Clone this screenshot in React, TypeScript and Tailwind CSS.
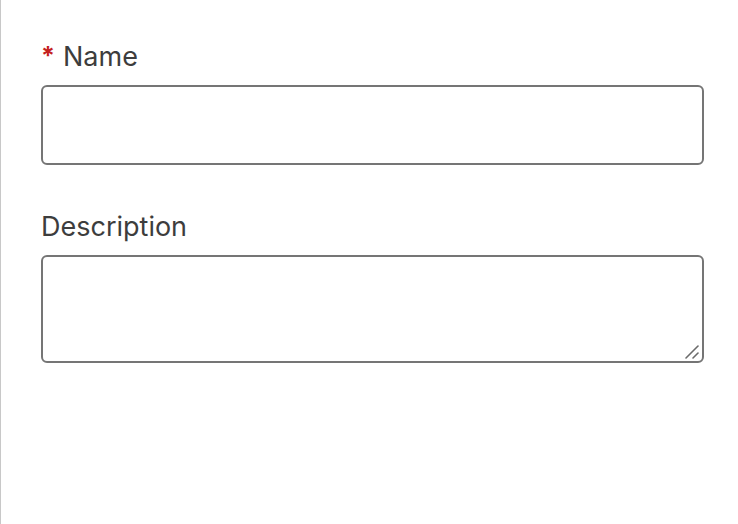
import React from "react";

export default function App() {
  return (
    <div className="w-[738px] h-[524px] bg-white border-l border-[#c8c8c8] flex flex-col pl-[40px] pr-[34px] pt-[41px]" style={{ fontFamily: "Inter, 'Noto Sans', sans-serif" }}>
      <label className="flex items-center h-[32px] text-[27px] leading-[32px] text-[#3d3d3d]">
        <span className="text-[#c4211e] font-bold text-[25px] mr-[8px] -mt-[3px]">*</span>
        <span>Name</span>
      </label>
      <input type="text" className="mt-[12px] h-[80px] w-full rounded-[6px] border-2 border-[#757575] bg-white outline-none" />
      <div className="mt-[46px] h-[32px] text-[27px] leading-[32px] text-[#3d3d3d]">Description</div>
      <div className="relative mt-[12px] h-[108px] w-full">
        <textarea className="block h-full w-full resize-none rounded-[6px] border-2 border-[#757575] bg-white outline-none" />
        <svg className="absolute right-[4px] bottom-[3px] w-[16px] h-[16px]" viewBox="0 0 16 16">
          <line x1="2" y1="14" x2="14" y2="2" stroke="#6b6b6b" strokeWidth="1.6" strokeLinecap="round" />
          <line x1="9" y1="14" x2="14" y2="9" stroke="#6b6b6b" strokeWidth="1.6" strokeLinecap="round" />
        </svg>
      </div>
    </div>
  );
}
